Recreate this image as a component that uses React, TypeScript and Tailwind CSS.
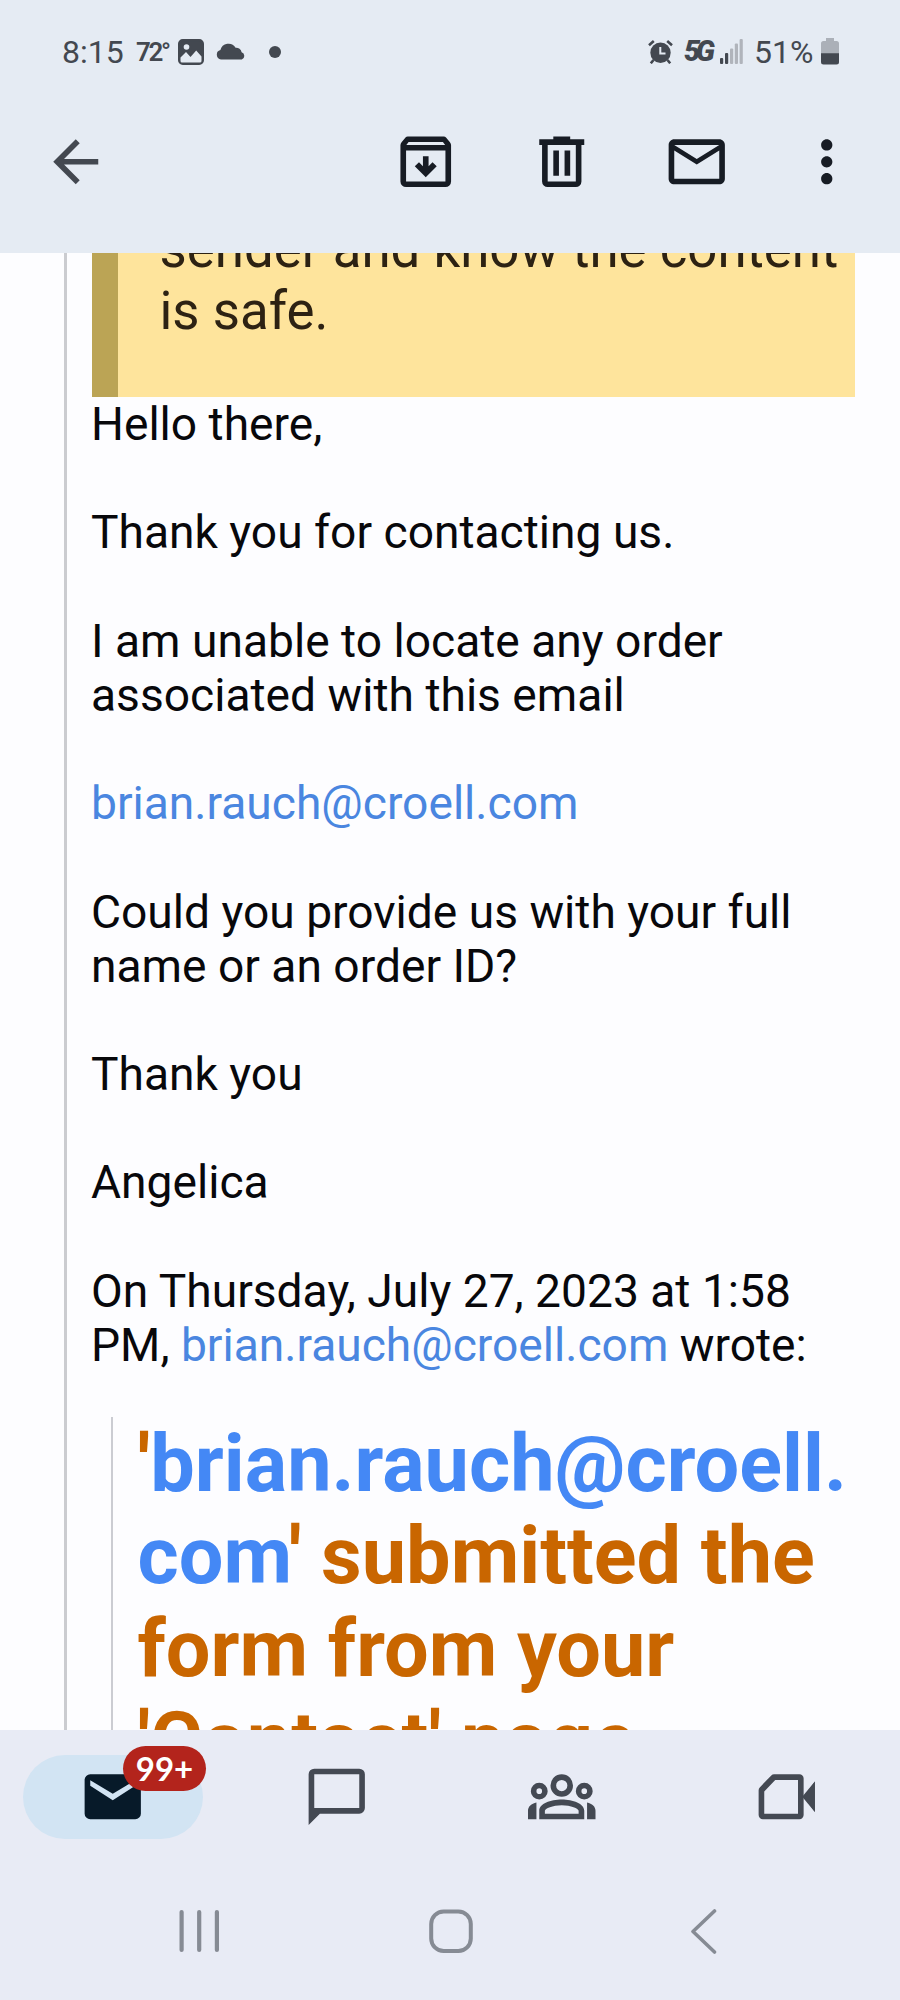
import type { ReactNode } from 'react';
import { MdArrowBack, MdMailOutline, MdMoreVert } from 'react-icons/md';

interface IconProps {
    /** Shapes drawn on a 24 unit grid */
    children: ReactNode;
}

/** Shared 24 unit icon frame */
function Icon({ children }: IconProps) {
    return (
        <svg viewBox="0 0 24 24" className="size-[67.5px] shrink-0" fill="currentColor" fillRule="evenodd">
            {children}
        </svg>
    );
}

/** Top status bar: clock, weather, notifications and signal */
function StatusBar() {
    return (
        <div className="flex h-[103px] items-center pl-[62px] pr-[61px] text-[#434850]">
            <span className="w-[74px] whitespace-nowrap text-[32px] leading-none">8:15</span>
            <span className="w-[42px] whitespace-nowrap text-[26px] font-semibold leading-none tracking-[-2.3px]">72°</span>
            <svg viewBox="0 0 26 26" className="size-[26px]" fill="none">
                <rect x="1.25" y="1.25" width="23.5" height="23.5" rx="3.5" fill="currentColor" stroke="currentColor" strokeWidth="2.5" />
                <circle cx="8.5" cy="8" r="2.8" fill="#e5ebf3" />
                <path d="M2.5 18.5 8 13l4.5 5 5.7-6.6 5.3 6V22a1.5 1.5 0 0 1-1.5 1.5H4A1.5 1.5 0 0 1 2.5 22z" fill="#e5ebf3" />
            </svg>
            <svg viewBox="0 0 30 17" className="ml-[12px] h-[17px] w-[30px]" fill="currentColor">
                <path d="M5 16.5a4.8 4.8 0 0 1-.6-9.4A8.3 8.3 0 0 1 19.6 4.7a5.5 5.5 0 0 1 6 4.6 3.8 3.8 0 0 1 .2 7.2z" />
            </svg>
            <div className="ml-[23px] size-[12px] rounded-full bg-[#434850]" />

            <div className="ml-auto flex items-center">
                <svg viewBox="0 0 25 24" className="mr-[11px] h-[24px] w-[25px]" fill="none" stroke="currentColor">
                    <circle cx="12.5" cy="12.8" r="10.2" fill="currentColor" stroke="none" />
                    <path d="M1 5.2 5.8 1M19.2 1 24 5.2" strokeWidth="2.6" />
                    <path d="M5.5 20 2.8 23.3M19.5 20l2.7 3.3" strokeWidth="2.6" />
                    <path d="M12.3 7v6.5h5.2" stroke="#e5ebf3" strokeWidth="2" />
                </svg>
                <span className="w-[36px] whitespace-nowrap text-[29px] font-black italic leading-none tracking-[-4.5px]">5G</span>
                <svg viewBox="0 0 24 25" className="h-[25px] w-[24px]" fill="currentColor">
                    <rect x="0" y="19" width="3.2" height="6" rx="1" />
                    <rect x="5" y="14" width="3.2" height="11" rx="1" />
                    <g fill="#b0b4bb">
                        <rect x="10" y="9.5" width="3.2" height="15.5" rx="1" />
                        <rect x="14.8" y="4.5" width="3.2" height="20.5" rx="1" />
                        <rect x="19.6" y="0" width="3.2" height="25" rx="1" />
                    </g>
                </svg>
                <span className="ml-[10px] w-[67px] whitespace-nowrap text-[32px] leading-none">51%</span>
                <svg viewBox="0 0 18 27" className="h-[27px] w-[18px]">
                    <path d="M5 0h8v3h2.5A2.5 2.5 0 0 1 18 5.5V16H0V5.5A2.5 2.5 0 0 1 2.5 3H5z" fill="#abb0b8" />
                    <path d="M0 15.3h18V24a2.5 2.5 0 0 1-2.5 2.5h-13A2.5 2.5 0 0 1 0 24z" fill="#434850" />
                </svg>
            </div>
        </div>
    );
}

/** Message actions */
function Toolbar() {
    return (
        <div className="flex h-[118px] items-center pl-[42px] pr-[40px] text-[#171c24]">
            <MdArrowBack className="size-[67.5px] text-[#434850]" />
            <div className="ml-auto flex">
                <Icon>
                    <path d="M5.6 3h12.8q.5 0 .8.4l1.4 1.7q.4.5.4 1V19a2 2 0 0 1-2 2H5a2 2 0 0 1-2-2V6.1q0-.5.4-1l1.4-1.7q.3-.4.8-.4zM5.9 5l-.8 1h13.8l-.8-1zM5 8v11h14V8z" />
                    <path d="M11 10h2v3.6l1.4-1.4 1.5 1.4L12 17.5l-3.9-3.9 1.5-1.4 1.4 1.4z" />
                </Icon>
                <div className="ml-[68px]">
                    <Icon>
                        <path d="M9 3h6v1h5v2h-1v13a2 2 0 0 1-2 2H7a2 2 0 0 1-2-2V6H4V4h5zM7 6v13h10V6zM9 8h2v9H9zM13 8h2v9h-2z" />
                    </Icon>
                </div>
                <MdMailOutline className="ml-[68px] size-[67.5px]" />
                <MdMoreVert className="ml-[62px] size-[67.5px]" />
            </div>
        </div>
    );
}

function Email() {
    return <span className="text-[#4a86e0]">brian.rauch@croell.com</span>;
}

/** Quoted message, scrolled part way down */
function Message() {
    return (
        <main className="h-[1477px] overflow-hidden bg-[#fdfdff] pl-[64px] pr-[45px]">
            <div className="-mt-[34px] border-l-[3px] border-[#cbccd0] pl-[25px]">
                <div className="whitespace-nowrap border-l-[26px] border-[#bba455] bg-[#fee49c] pb-[55.2px] pl-[41.5px] text-[52.8px] leading-[61.5px] text-[#2d2213]">
                    sender and know the content
                    <br />
                    is safe.
                </div>

                <div className="-ml-px space-y-[54.15px] whitespace-nowrap text-[46.15px] leading-[54.15px] text-[#08080b]">
                    <p>Hello there,</p>
                    <p>Thank you for contacting us.</p>
                    <p>
                        I am unable to locate any order
                        <br />
                        associated with this email
                    </p>
                    <p>
                        <Email />
                    </p>
                    <p>
                        Could you provide us with your full
                        <br />
                        name or an order ID?
                    </p>
                    <p>Thank you</p>
                    <p>Angelica</p>
                    <p>
                        On Thursday, July 27, 2023 at 1:58
                        <br />
                        PM, <Email /> wrote:
                    </p>
                </div>

                <blockquote className="ml-[19px] mt-[45px] border-l-[2px] border-[#cbccd2] pl-[24.5px] pt-px">
                    <h1 className="whitespace-nowrap text-[79.2px] font-bold leading-[92.5px] text-[#c96600]">
                        '<span className="text-[#4488f5]">brian.rauch@croell.</span>
                        <br />
                        <span className="text-[#4488f5]">com</span>' submitted the
                        <br />
                        form from your
                        <br />
                        'Contact' page
                    </h1>
                </blockquote>
            </div>
        </main>
    );
}

/** App sections: mail, chat, spaces, meet */
function BottomTabs() {
    return (
        <nav className="-ml-[0.5px] grid h-[134px] w-[900px] grid-cols-4 place-items-center text-[#444953]">
            <div className="relative ml-px flex h-[84px] w-[180px] items-center justify-center rounded-full bg-[#d2e4f3] text-[#071a29]">
                <Icon>
                    <path d="M4 4h16a2 2 0 0 1 2 2v12a2 2 0 0 1-2 2H4a2 2 0 0 1-2-2V6a2 2 0 0 1 2-2zM4 6.1V8.1l8 5.1 8-5.1V6.1l-8 4.8z" />
                </Icon>
                <span className="absolute -top-[9px] left-[100.5px] flex h-[45px] w-[83px] items-center justify-center rounded-full bg-[#b3241c] pb-px font-[Lato] text-[33px] font-bold leading-none text-white">
                    99+
                </span>
            </div>
            <Icon>
                <path d="M4 2h16a2 2 0 0 1 2 2v12a2 2 0 0 1-2 2H6l-4 4V4a2 2 0 0 1 2-2zM4 4v12h16V4z" />
            </Icon>
            <Icon>
                <path d="M12 4a4 4 0 1 1 0 8 4 4 0 0 1 0-8zm0 2a2 2 0 1 0 0 4 2 2 0 0 0 0-4z" />
                <path d="M4 7a3 3 0 1 1 0 6 3 3 0 0 1 0-6zm0 2a1 1 0 1 0 0 2 1 1 0 0 0 0-2zM20 7a3 3 0 1 1 0 6 3 3 0 0 1 0-6zm0 2a1 1 0 1 0 0 2 1 1 0 0 0 0-2z" />
                <path d="M4 20v-3c0-2.5 4-4 8-4s8 1.5 8 4v3zm2-2h12v-1c0-.8-2.8-2-6-2s-6 1.2-6 2z" />
                <path d="M0 20v-3c0-1.6 1.2-2.6 3-3v6zM24 20v-3c0-1.6-1.2-2.6-3-3v6z" />
            </Icon>
            <Icon>
                <path d="M7.5 4h9A1.5 1.5 0 0 1 18 5.5V12l4-5.4v10.8L18 12v6.5a1.5 1.5 0 0 1-1.5 1.5h-13A1.5 1.5 0 0 1 2 18.5V9.7q0-.6.4-1l4.1-4.3q.4-.4 1-.4zM7.9 6 4 10.1V18h12V6z" />
                <path d="M17.5 12 22 6.6v10.8z" />
            </Icon>
        </nav>
    );
}

/** Android recents, home and back keys */
function SystemKeys() {
    return (
        <div className="flex h-[136px] items-center justify-between px-[177px] pb-[2px] text-[#868b94]">
            <svg viewBox="0 0 44 44" className="size-[44px]" fill="none" stroke="currentColor" strokeWidth="4.2" strokeLinecap="round">
                <path d="M4.6 3v38M22.2 3v38M39.9 3v38" />
            </svg>
            <svg viewBox="0 0 44 44" className="ml-px size-[44px]" fill="none" stroke="currentColor" strokeWidth="4">
                <rect x="2.2" y="2.5" width="39.6" height="39.5" rx="12.5" />
            </svg>
            <svg viewBox="0 0 44 46" className="h-[46px] w-[44px]" fill="none" stroke="currentColor" strokeWidth="3.6" strokeLinecap="round" strokeLinejoin="round">
                <path d="M35.5 3 14 23.5 35.5 44" />
            </svg>
        </div>
    );
}

export default function App() {
    return (
        <div className="h-[2000px] w-[900px] overflow-hidden bg-[#e8ebf5] font-[Roboto,sans-serif]">
            <header className="h-[253px] bg-[#e5ebf3]">
                <StatusBar />
                <Toolbar />
            </header>
            <Message />
            <BottomTabs />
            <SystemKeys />
        </div>
    );
}
